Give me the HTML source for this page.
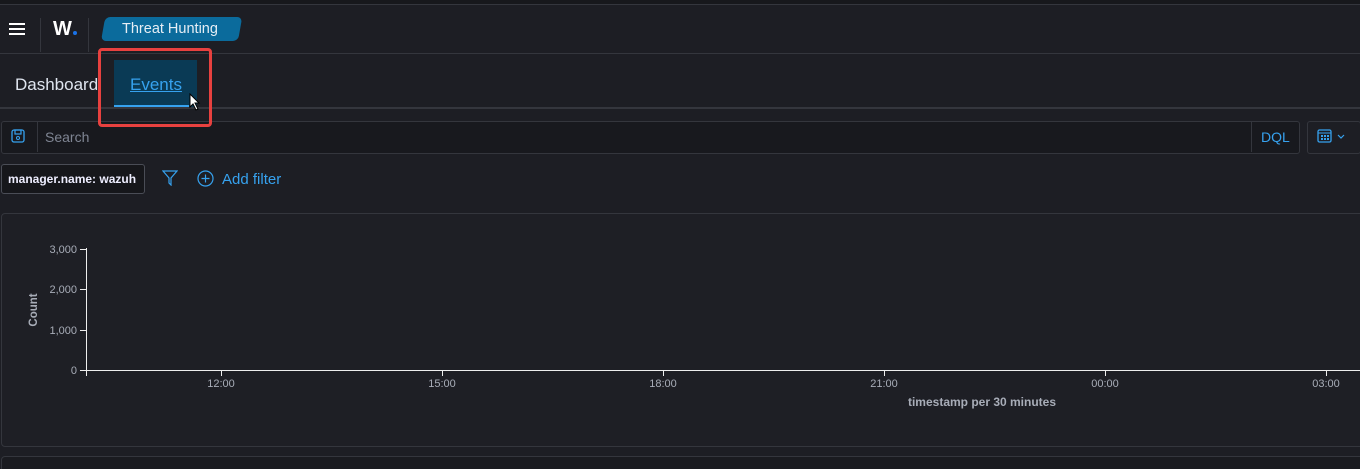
<!DOCTYPE html>
<html><head><style>
html,body{margin:0;width:1360px;height:469px;overflow:hidden}
body{background:#1d1e24;font-family:"Liberation Sans",sans-serif;position:relative;color:#dfe5ef}
.a{position:absolute}
</style></head><body>
<div class="a" style="left:0;top:0;width:1360px;height:4px;background:#17181c;border-bottom:1px solid #34363d"></div>
<div class="a" style="left:9px;top:23px;width:16px;height:2px;background:#fff;box-shadow:0 5px 0 #fff,0 10px 0 #fff"></div>
<div class="a" style="left:40px;top:18px;width:1px;height:34px;background:#34363d"></div>
<div class="a" style="left:88px;top:18px;width:1px;height:34px;background:#34363d"></div>
<div class="a" style="left:53px;top:18px;font-size:20px;font-weight:bold;color:#fff;letter-spacing:-1px">W<span style="display:inline-block;width:4px;height:4px;border-radius:50%;background:#1a73e8;margin-left:2px"></span></div>
<div class="a" style="left:101px;top:17px;width:137px;height:24px;background:#0b6b9c;border-radius:5px;transform:skewX(-10deg);transform-origin:bottom left"></div>
<div class="a" style="left:122px;top:21px;font-size:14.5px;color:#e6eef5">Threat Hunting</div>
<div class="a" style="left:0;top:53px;width:1360px;height:1px;background:#34363d"></div>
<div class="a" style="left:15px;top:75px;font-size:17px;color:#dfe5ef">Dashboard</div>
<div class="a" style="left:114px;top:60px;width:83px;height:47px;background:#0a3a55"></div>
<div class="a" style="left:130px;top:75px;font-size:17px;color:#36a2ef;text-decoration:underline">Events</div>
<div class="a" style="left:114px;top:105px;width:75px;height:2px;background:#36a2ef"></div>
<div class="a" style="left:0;top:107px;width:1360px;height:2px;background:#34363d"></div>
<div class="a" style="left:1px;top:121px;width:1297px;height:31px;border:1px solid #34363d;background:#18191e;border-radius:3px"></div>
<div class="a" style="left:37px;top:122px;width:1px;height:30px;background:#34363d"></div>
<div class="a" style="left:1251px;top:122px;width:1px;height:30px;background:#34363d"></div>
<svg class="a" style="left:11px;top:129px" width="14" height="14"><rect x="1" y="1" width="12" height="12" rx="2" fill="none" stroke="#36a2ef" stroke-width="1.3"/><rect x="4" y="1" width="6" height="4" fill="none" stroke="#36a2ef" stroke-width="1.2"/><circle cx="7" cy="9" r="1.5" fill="none" stroke="#36a2ef"/></svg>
<div class="a" style="left:45px;top:129px;font-size:14px;color:#7f8593">Search</div>
<div class="a" style="left:1261px;top:129px;font-size:14px;color:#36a2ef">DQL</div>
<div class="a" style="left:1307px;top:121px;width:52px;height:31px;border:1px solid #34363d;border-radius:3px"></div>
<svg class="a" style="left:1317px;top:128px" width="30" height="16"><rect x="1" y="2" width="13" height="12" rx="1.5" fill="none" stroke="#36a2ef" stroke-width="1.3"/><line x1="1" y1="5" x2="14" y2="5" stroke="#36a2ef"/><g fill="#36a2ef"><rect x="4" y="7" width="2" height="2"/><rect x="7" y="7" width="2" height="2"/><rect x="10" y="7" width="2" height="2"/><rect x="4" y="10" width="2" height="2"/><rect x="7" y="10" width="2" height="2"/><rect x="10" y="10" width="2" height="2"/></g><path d="M21 7 L24 10 L27 7" fill="none" stroke="#36a2ef" stroke-width="1.2"/></svg>
<div class="a" style="left:1px;top:164px;width:142px;height:28px;border:1px solid #4a4d56;background:#16171b;border-radius:3px"></div>
<div class="a" style="left:8px;top:172px;font-size:12px;font-weight:bold;color:#eef">manager.name: wazuh</div>
<svg class="a" style="left:162px;top:170px" width="16" height="16"><path d="M1 1 L15 1 L9 8 L9 15 L7 13 L7 8 Z" fill="none" stroke="#36a2ef" stroke-width="1.2"/></svg>
<svg class="a" style="left:197px;top:170px" width="17" height="17"><circle cx="8.5" cy="8.5" r="7.5" fill="none" stroke="#36a2ef" stroke-width="1.2"/><path d="M8.5 4.5 V12.5 M4.5 8.5 H12.5" stroke="#36a2ef" stroke-width="1.2"/></svg>
<div class="a" style="left:222px;top:171px;font-size:15px;color:#36a2ef">Add filter</div>
<div class="a" style="left:1px;top:213px;width:1365px;height:232px;border:1px solid #34363d;border-radius:4px;background:#1e1f25"></div>
<div class="a" style="left:1px;top:456px;width:1365px;height:20px;border:1px solid #34363d;border-radius:4px;background:#1a1b20"></div>
<svg class="a" style="left:0;top:213px" width="1360" height="232" font-family="Liberation Sans" font-size="11" fill="#a8adb8">
<g stroke="#eee" stroke-width="1"><line x1="86.5" y1="35" x2="86.5" y2="163"/><line x1="86" y1="157.5" x2="1360" y2="157.5"/>
<line x1="80" y1="36.5" x2="86" y2="36.5"/><line x1="80" y1="76.5" x2="86" y2="76.5"/><line x1="80" y1="117.5" x2="86" y2="117.5"/><line x1="80" y1="157.5" x2="86" y2="157.5"/>
<line x1="221.5" y1="157" x2="221.5" y2="163"/><line x1="442.5" y1="157" x2="442.5" y2="163"/><line x1="663.5" y1="157" x2="663.5" y2="163"/><line x1="884.5" y1="157" x2="884.5" y2="163"/><line x1="1105.5" y1="157" x2="1105.5" y2="163"/><line x1="1326.5" y1="157" x2="1326.5" y2="163"/></g>
<g text-anchor="end"><text x="77" y="40">3,000</text><text x="77" y="80">2,000</text><text x="77" y="121">1,000</text><text x="77" y="161">0</text></g>
<g text-anchor="middle"><text x="221" y="174">12:00</text><text x="442" y="174">15:00</text><text x="663" y="174">18:00</text><text x="884" y="174">21:00</text><text x="1105" y="174">00:00</text><text x="1326" y="174">03:00</text>
<text x="982" y="193" font-weight="bold" font-size="12">timestamp per 30 minutes</text>
<text transform="translate(37,97) rotate(-90)" font-weight="bold" font-size="11.5">Count</text></g>
</svg>
<div class="a" style="left:98px;top:48px;width:114px;height:79px;border:3px solid #e8413f;border-radius:4px;box-sizing:border-box;z-index:10"></div>
<svg class="a" style="left:189px;top:93px;z-index:11" width="12" height="18"><path d="M1 1 L1 14 L4 11 L7 17 L9 16 L6 10 L10 10 Z" fill="#fff" stroke="#000"/></svg>
</body></html>
